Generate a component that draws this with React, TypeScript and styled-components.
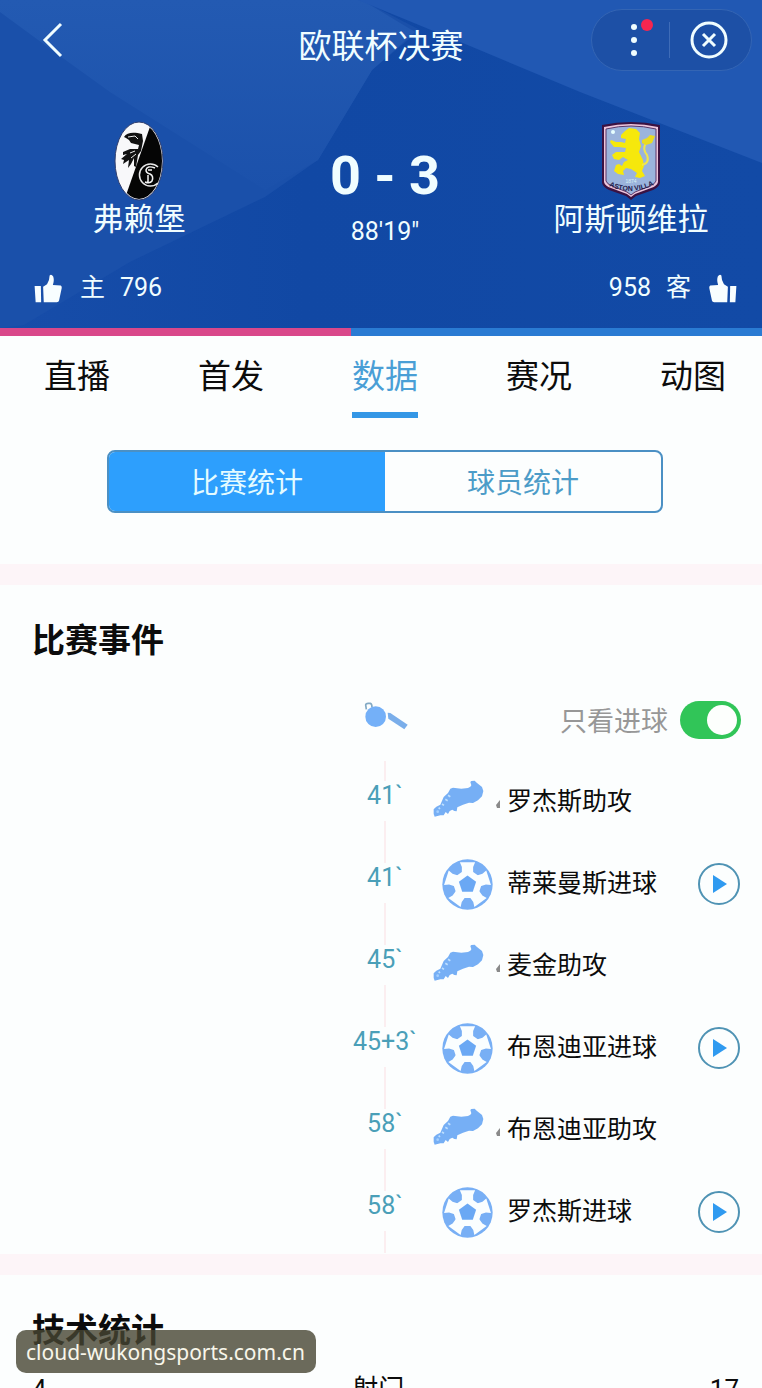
import { useState } from 'react';
import styled, { createGlobalStyle, css } from 'styled-components';

const GlobalStyle = createGlobalStyle`
  * {
    box-sizing: border-box;
  }

  body {
    margin: 0;
    background: #fcfefe;
    font-family: Roboto, 'Noto Sans CJK SC', sans-serif;
    color: #0c0c0c;
  }

  button {
    font-family: inherit;
    padding: 0;
    border: none;
    background: none;
    color: inherit;
    cursor: pointer;
  }

  svg {
    display: block;
    flex-shrink: 0;
  }
`;

const Page = styled.div`
  position: relative;
  height: 100vh;
  overflow: hidden;
`;

const Header = styled.header`
  position: relative;
  overflow: hidden;
  background: #1249a5;
  color: #f0fdff;
`;

const Backdrop = styled.svg`
  position: absolute;
  inset: 0;
  width: 100%;
  height: 100%;
`;

const HeaderBody = styled.div`
  position: relative;
`;

const NavBar = styled.div`
  display: grid;
  grid-template-columns: 1fr auto 1fr;
  align-items: center;
  height: 80px;
  padding: 0 10px;
`;

const BackButton = styled.button`
  justify-self: start;
  padding: 0 32px;
`;

const PageTitle = styled.h1`
  margin: 0;
  padding-top: 14px;
  font-size: 33px;
  line-height: 48px;
  font-weight: 400;
`;

const Capsule = styled.div`
  justify-self: end;
  display: flex;
  align-items: center;
  width: 161px;
  height: 62px;
  padding-right: 4px;
  border: 1px solid #3465b4;
  border-radius: 31px;
  background: #1d50a6;
`;

const CapsuleButton = styled.button`
  flex: 1;
  display: flex;
  justify-content: center;
`;

const CapsuleDivider = styled.span`
  width: 1px;
  height: 36px;
  background: #3e6cb8;
`;

const Match = styled.div`
  display: flex;
  justify-content: space-between;
  padding: 41px 46px 0 54px;
`;

const Team = styled.div`
  display: flex;
  flex-direction: column;
  align-items: center;
  width: 170px;
  font-size: 31px;
  line-height: 38px;
`;

const ScoreBox = styled.div`
  display: flex;
  flex-direction: column;
  align-items: center;
  gap: 11px;
  padding-top: 25px;
`;

const Score = styled.strong`
  font-size: 54px;
  line-height: 60px;
  font-weight: 700;
  white-space: nowrap;
`;

const Clock = styled.span`
  font-size: 25px;
  line-height: 30px;
`;

const Votes = styled.div`
  display: flex;
  justify-content: space-between;
  padding: 23px 25px 22px 34px;
`;

const VoteButton = styled.button<{ $away?: boolean }>`
  display: flex;
  flex-direction: ${({ $away }) => ($away ? 'row-reverse' : 'row')};
  align-items: center;
  gap: 15px;
  height: 36px;
  font-size: 25px;
  line-height: 36px;

  svg {
    margin: 0 3px 0 0;
    ${({ $away }) => $away && css`
      margin: 0 0 0 3px;
      transform: scaleX(-1);
    `}
  }
`;

const ShareBar = styled.div`
  display: flex;
  height: 8px;
`;

const Share = styled.span<{ $grow: number; $color: string }>`
  flex: ${({ $grow }) => $grow};
  background: ${({ $color }) => $color};
`;

const Tabs = styled.nav`
  display: flex;
  justify-content: space-between;
  padding: 17px 36px 0 44px;
`;

const Tab = styled.button<{ $active: boolean }>`
  padding-bottom: 11px;
  border-bottom: 6px solid ${({ $active }) => ($active ? '#3497e6' : 'transparent')};
  color: ${({ $active }) => ($active ? '#4a9fd6' : '#0c0c0c')};
  font-size: 33px;
  line-height: 48px;
`;

const Segmented = styled.div`
  display: flex;
  height: 63px;
  margin: 32px 99px 51px 107px;
  border: 2px solid #4b90c4;
  border-radius: 8px;
  overflow: hidden;
`;

const Segment = styled.button<{ $active: boolean }>`
  flex: 1;
  padding-top: 4px;
  background: ${({ $active }) => ($active ? '#2d9ffd' : 'transparent')};
  color: ${({ $active }) => ($active ? '#e4fbff' : '#4c9cc8')};
  font-size: 28px;
  line-height: 40px;
`;

const Divider = styled.div`
  height: 21px;
  background: #fdf5f8;
`;

const Section = styled.section`
  padding-top: 32px;
`;

const SectionTitle = styled.h2`
  margin: 0;
  padding: 0 32px;
  font-size: 33px;
  line-height: 48px;
  font-weight: 700;
`;

const timelineGrid = css`
  display: grid;
  grid-template-columns: 1fr 80px 1fr;
  padding-left: 8px;
`;

const FilterRow = styled.div`
  ${timelineGrid}
  align-items: center;
  height: 60px;
  margin: 25px 0 10px;
`;

const WhistleSlot = styled.div`
  grid-column: 2;
  display: flex;
  justify-content: center;
  padding: 0 0 8px 2px;
`;

const FilterLabel = styled.label`
  display: flex;
  align-items: center;
  justify-content: flex-end;
  gap: 12px;
  padding-right: 21px;
  color: #979797;
  font-size: 27px;
  line-height: 40px;

  span {
    padding-top: 3px;
  }
`;

const Switch = styled.input`
  appearance: none;
  display: flex;
  align-items: center;
  width: 61px;
  height: 38px;
  margin: 0;
  padding: 0 4px;
  border-radius: 19px;
  background: #c8c8c8;
  cursor: pointer;

  &::before {
    content: '';
    width: 30px;
    height: 30px;
    border-radius: 50%;
    background: #fdfffd;
  }

  &:checked {
    justify-content: flex-end;
    background: #31c558;
  }
`;

const EventList = styled.ul`
  margin: 0;
  padding: 1px 0;
  list-style: none;
`;

const EventRow = styled.li`
  ${timelineGrid}
  height: 82px;
`;

const TimeColumn = styled.div`
  grid-column: 2;
  display: flex;
  flex-direction: column;
  align-items: center;

  &::before,
  &::after {
    content: '';
    width: 2px;
    background: #fbeef0;
  }

  &::before {
    height: 20px;
  }

  &::after {
    flex: 1;
  }
`;

const Minute = styled.time`
  padding-bottom: 10px;
  color: #4a9fb8;
  font-size: 25px;
  line-height: 30px;
`;

const EventBody = styled.div`
  display: flex;
  align-items: center;
  padding-right: 22px;
`;

const EventIcon = styled.span<{ $goal: boolean }>`
  display: flex;
  align-items: center;
  gap: 11px;
  width: 82px;
  padding-left: ${({ $goal }) => ($goal ? '17px' : '8px')};
  padding-bottom: ${({ $goal }) => ($goal ? '0' : '8px')};
`;

const EventText = styled.span`
  flex: 1;
  font-size: 25px;
  line-height: 36px;
  white-space: nowrap;
`;

const StatRow = styled.div`
  display: flex;
  justify-content: space-between;
  margin-top: 14px;
  padding: 0 23px 0 32px;
  font-size: 26px;
  line-height: 40px;
`;

const SiteTag = styled.div`
  position: absolute;
  left: 16px;
  bottom: 15px;
  padding: 2px 11px 0 10px;
  border-radius: 10px;
  background: rgba(70, 69, 50, 0.8);
  color: #f8f6ea;
  font-family: 'Noto Sans', sans-serif;
  font-size: 21px;
  line-height: 41px;
`;

function HeaderBackdrop() {
  return (
    <Backdrop viewBox="0 0 762 328" preserveAspectRatio="none" aria-hidden>
      <defs>
        <linearGradient id="shade" x1="0" y1="0" x2="1" y2="0">
          <stop offset="0" stopColor="#174da9" />
          <stop offset="0.4" stopColor="#1148a4" />
          <stop offset="1" stopColor="#124aa6" />
        </linearGradient>
        <linearGradient id="glow" x1="0" y1="0" x2="0" y2="1">
          <stop offset="0" stopColor="#235ab2" />
          <stop offset="1" stopColor="#1b51ab" />
        </linearGradient>
      </defs>
      <rect width="762" height="328" fill="url(#shade)" />
      <path d="M0 0H362L420 30L372 70L318 160L265 197L130 262L24 325L0 328Z" fill="#1a50aa" />
      <path d="M0 0H362L415 32L372 70L318 160L265 190L110 92L60 56L0 12Z" fill="url(#glow)" />
      <path d="M358 0H762V163L580 92L470 46Z" fill="#2158b3" />
    </Backdrop>
  );
}

function FreiburgCrest() {
  return (
    <svg width="50" height="80" viewBox="0 0 50 80" role="img" aria-label="弗赖堡">
      <clipPath id="oval">
        <ellipse cx="25" cy="40" rx="23" ry="38" />
      </clipPath>
      <ellipse cx="25" cy="40" rx="24" ry="39" fill="#f8f8fa" stroke="#33406e" strokeWidth="1" />
      <g clipPath="url(#oval)">
        <path d="M38 0H50V80H10Z" fill="#050505" />
      </g>
      <path d="M10 16C13 11 20 11 28 13L29 20L27 30L24 34L22 46L20 45L20 37L17 43L14 47L15 39L9 43L10 39L7 38L13 33L9 34L9 31L16 28L24 28L25 24L17 22L15 19L12 17Z" fill="#111" />
      <path d="M14 16L21 15L24 18M16 32L21 30M17 37L22 33" stroke="#eee" strokeWidth="1" fill="none" />
      <path d="M44 46A11 11 0 1 0 44 62" stroke="#e8e8e8" strokeWidth="1.5" fill="none" />
      <path d="M41 47Q33 44 32 49Q32 52 36 53Q40 55 38 60Q36 63 31 61M34 54V61M38 49H34" stroke="#f4f4f4" strokeWidth="1.5" fill="none" />
    </svg>
  );
}

function VillaCrest() {
  return (
    <svg width="60" height="80" viewBox="0 0 60 80" role="img" aria-label="阿斯顿维拉">
      <path d="M1 4Q30 -2 59 4V62Q58 66 52 69L35 75L30 79L25 75L8 69Q2 66 1 62Z" fill="#3b1242" />
      <path d="M3 6Q30 0 57 6V61Q56 65 50 67L34 73L30 76L26 73L10 67Q4 65 3 61Z" fill="#edc6dc" />
      <path d="M5 8Q30 2 55 8V60Q54 63 49 65L34 71L30 74L26 71L11 65Q6 63 5 60Z" fill="#9bb4dc" stroke="#5b3768" strokeWidth="1" />
      <circle cx="12" cy="11" r="2" fill="#e8ffff" />
      <path
        d="M24 10L28 7L35 8L39 12L38 18L40 25L38 31L42 39L43 45L41 50L44 55L39 57L34 56L36 52L30 48L25 47L22 50L23 54L17 53L13 50L15 44L18 43L21 45L23 41L27 39L22 36L18 39L13 38L11 34L15 31L24 31L25 27L18 26L13 26L9 21L10 19L15 21L20 21L24 22L25 18L20 17L20 14Z"
        fill="#f6e80c"
      />
      <path d="M41 44Q49 42 46 34Q41 28 45 22" stroke="#f0e64c" strokeWidth="2" fill="none" />
      <path d="M41 19L46 17L49 14L54 15L51 22L45 24L41 22Z" fill="#eadc20" />
      <path id="motto" d="M8 65Q30 75 53 64" fill="none" />
      <text fontFamily="Liberation Sans, sans-serif" fontSize="7" fontWeight="700" fill="#23204c">
        <textPath href="#motto" startOffset="50%" textAnchor="middle">ASTON VILLA</textPath>
      </text>
      <text x="30" y="62" textAnchor="middle" fontFamily="Liberation Sans, sans-serif" fontSize="5" fill="#d8f0f4">1874</text>
    </svg>
  );
}

function ThumbIcon() {
  return (
    <svg width="28" height="29" viewBox="40 22 86 88" fill="#f8feff" aria-hidden>
      <path d="M42 58H61L62 108H45Z" />
      <path d="M68 61L80 53L86 40L88 26Q93 20 99 29Q103 40 98 55L122 57Q126 59 125 65L117 103Q116 108 110 108H70Z" />
    </svg>
  );
}

function WhistleIcon() {
  return (
    <svg width="44" height="28" viewBox="72 36 132 84" aria-hidden>
      <path d="M79 58L77 45Q77 40 85 40H91Q96 41 96 52" stroke="#82a9c4" strokeWidth="5" fill="none" />
      <circle cx="107" cy="80" r="31" fill="#74b0f8" />
      <path d="M143 68L151 69L203 104L193 118L145 86Z" fill="#7aaeea" />
    </svg>
  );
}

function BootIcon() {
  return (
    <svg width="51" height="37" viewBox="40 24 153 111" aria-hidden>
      <path
        d="M155 27L165 26L172 33L187 45L191 57L187 73L175 85L160 93L148 92L130 98L113 106L111 118L104 117L98 113L90 117L85 126L78 120L72 130L62 130L45 134L42 126V112L50 104L62 98L72 75L85 63L92 50L100 47L125 50L145 48L152 44L155 40L152 30Z"
        fill="#76aff5"
      />
      <path d="M85 70L92 74M77 82L84 86M67 96L73 100M57 107L61 111" stroke="#bfe0ff" strokeWidth="5" />
      <circle cx="54" cy="119" r="4" fill="#a4d0ff" />
    </svg>
  );
}

function BallIcon() {
  return (
    <svg width="51" height="51" viewBox="-77 -77 154 154" aria-hidden>
      <circle r="76" fill="#78aff5" />
      <path d="M0 -50L48 -16L29 41H-29L-48 -16Z" fill="#fafeff" />
      {[0, 72, 144, 216, 288].map((angle) => (
        <path
          key={angle}
          d="M-23 -67H23L17 -53V-28H-17V-53Z"
          fill="#fafeff"
          transform={`rotate(${angle})`}
        />
      ))}
      <path d="M0 -27L26 -8L16 22H-16L-26 -8Z" fill="#6aa8f4" />
    </svg>
  );
}

const events = [
  { minute: '41`', text: '罗杰斯助攻', goal: false },
  { minute: '41`', text: '蒂莱曼斯进球', goal: true },
  { minute: '45`', text: '麦金助攻', goal: false },
  { minute: '45+3`', text: '布恩迪亚进球', goal: true },
  { minute: '58`', text: '布恩迪亚助攻', goal: false },
  { minute: '58`', text: '罗杰斯进球', goal: true },
];

const tabs = ['直播', '首发', '数据', '赛况', '动图'];
const segments = ['比赛统计', '球员统计'];

export default function App() {
  const [tab, setTab] = useState('数据');
  const [segment, setSegment] = useState('比赛统计');
  const [goalsOnly, setGoalsOnly] = useState(true);

  return (
    <Page>
      <GlobalStyle />
      <Header>
        <HeaderBackdrop />
        <HeaderBody>
          <NavBar>
            <BackButton aria-label="返回">
              <svg width="22" height="38" viewBox="0 0 22 38" fill="none">
                <path d="M19 3L3 19L19 35" stroke="#f0fdff" strokeWidth="3" />
              </svg>
            </BackButton>
            <PageTitle>欧联杯决赛</PageTitle>
            <Capsule>
              <CapsuleButton aria-label="更多">
                <svg width="46" height="44" viewBox="0 0 46 44" fill="#f0fdff">
                  <circle cx="26" cy="9" r="3" />
                  <circle cx="26" cy="22" r="3" />
                  <circle cx="26" cy="35" r="3" />
                  <circle cx="39" cy="7" r="6" fill="#f52650" />
                </svg>
              </CapsuleButton>
              <CapsuleDivider />
              <CapsuleButton aria-label="关闭">
                <svg width="38" height="38" viewBox="0 0 38 38" fill="none" stroke="#f0fdff" strokeWidth="3">
                  <circle cx="19" cy="19" r="17" />
                  <path d="M13 13L25 25M25 13L13 25" />
                </svg>
              </CapsuleButton>
            </Capsule>
          </NavBar>

          <Match>
            <Team>
              <FreiburgCrest />
              弗赖堡
            </Team>
            <ScoreBox>
              <Score>0 - 3</Score>
              <Clock>88'19"</Clock>
            </ScoreBox>
            <Team>
              <VillaCrest />
              阿斯顿维拉
            </Team>
          </Match>

          <Votes>
            <VoteButton>
              <ThumbIcon />
              <span>主</span>
              <span>796</span>
            </VoteButton>
            <VoteButton $away>
              <ThumbIcon />
              <span>客</span>
              <span>958</span>
            </VoteButton>
          </Votes>
        </HeaderBody>
      </Header>
      <ShareBar>
        <Share $grow={46} $color="#d9488a" />
        <Share $grow={54} $color="#2a7bd3" />
      </ShareBar>

      <Tabs>
        {tabs.map((name) => (
          <Tab key={name} $active={name === tab} onClick={() => setTab(name)}>
            {name}
          </Tab>
        ))}
      </Tabs>
      <Segmented>
        {segments.map((name) => (
          <Segment key={name} $active={name === segment} onClick={() => setSegment(name)}>
            {name}
          </Segment>
        ))}
      </Segmented>

      <Divider />

      <Section>
        <SectionTitle>比赛事件</SectionTitle>
        <FilterRow>
          <WhistleSlot>
            <WhistleIcon />
          </WhistleSlot>
          <FilterLabel>
            <span>只看进球</span>
            <Switch
              type="checkbox"
              role="switch"
              checked={goalsOnly}
              onChange={(e) => setGoalsOnly(e.target.checked)}
            />
          </FilterLabel>
        </FilterRow>
        <EventList>
          {events.map((event) => (
            <EventRow key={event.minute + event.text}>
              <TimeColumn>
                <Minute>{event.minute}</Minute>
              </TimeColumn>
              <EventBody>
                <EventIcon $goal={event.goal}>
                  {event.goal ? <BallIcon /> : <BootIcon />}
                  {!event.goal && (
                    <svg width="8" height="24" viewBox="0 0 8 24" aria-hidden>
                      <path d="M1 19L5 14V22H2Z" fill="#8a8a8a" />
                    </svg>
                  )}
                </EventIcon>
                <EventText>{event.text}</EventText>
                {event.goal && (
                  <button aria-label={`播放 ${event.text}`}>
                    <svg width="42" height="42" viewBox="0 0 42 42" fill="none">
                      <circle cx="21" cy="21" r="20" stroke="#4f93b4" strokeWidth="2" />
                      <path d="M15 12L29 21L15 30Z" fill="#2f9af0" />
                    </svg>
                  </button>
                )}
              </EventBody>
            </EventRow>
          ))}
        </EventList>
      </Section>

      <Divider />

      <Section>
        <SectionTitle>技术统计</SectionTitle>
        <StatRow>
          <span>4</span>
          <span>射门</span>
          <span>17</span>
        </StatRow>
      </Section>

      <SiteTag>cloud-wukongsports.com.cn</SiteTag>
    </Page>
  );
}
